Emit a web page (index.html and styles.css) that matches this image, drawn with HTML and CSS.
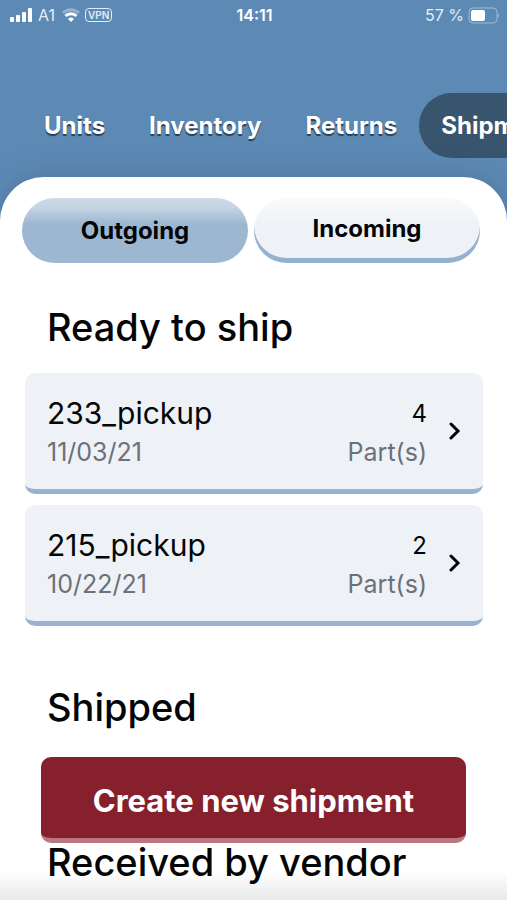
FILE: index.html
```html
<!DOCTYPE html>
<html lang="en">
<head>
<meta charset="utf-8">
<meta name="viewport" content="width=device-width, initial-scale=1">
<title>Shipments</title>
<link rel="stylesheet" href="styles.css">
</head>
<body>
<div class="app">
  <header class="header">
    <div class="status">
      <div class="status-left">
        <svg class="signal" width="23" height="15" viewBox="0 0 23 15" aria-hidden="true"><rect x="0" y="9" width="4" height="5" rx="1"/><rect x="6" y="7" width="4" height="7" rx="1"/><rect x="12" y="4" width="4" height="10" rx="1"/><rect x="18" y="0" width="4" height="14" rx="1"/></svg>
        <span>A1</span>
        <svg class="wifi" width="18" height="15" viewBox="0 0 18 15" aria-hidden="true"><path class="faint" d="M1 5a11.500 11.500 0 0 1 16 0"/><path d="M3.500 8a8 8 0 0 1 11 0"/><path class="dot" d="M9 14L6 11a4.300 4.300 0 0 1 6 0z"/></svg>
        <span class="vpn">VPN</span>
      </div>
      <span class="clock">14:11</span>
      <div class="status-right">
        <span>57 %</span>
        <svg width="31" height="17" viewBox="0 0 31 17" aria-hidden="true"><rect class="cell" x="1" y="1" width="28" height="15" rx="4"/><rect class="charge" x="3" y="3" width="14" height="11" rx="2"/><path class="cap" d="M30 6q2 2.500 0 5z"/></svg>
      </div>
    </div>
    <nav class="nav">
      <a href="#units">Units</a>
      <a href="#inventory">Inventory</a>
      <a href="#returns">Returns</a>
      <a class="current" href="#shipments" aria-current="page">Shipments</a>
    </nav>
  </header>
  <main class="panel">
    <div class="tabs">
      <button class="tab selected" type="button">Outgoing</button>
      <button class="tab" type="button">Incoming</button>
    </div>
    <section>
      <h2>Ready to ship</h2>
      <a class="card" href="#233">
        <span class="info"><span class="name">233_pickup</span><span class="sub">11/03/21</span></span>
        <span class="count"><span class="number">4</span><span class="sub">Part(s)</span></span>
        <svg class="chevron" width="12" height="18" viewBox="0 0 12 18" aria-hidden="true"><path d="M2 2l7 7-7 7"/></svg>
      </a>
      <a class="card" href="#215">
        <span class="info"><span class="name">215_pickup</span><span class="sub">10/22/21</span></span>
        <span class="count"><span class="number">2</span><span class="sub">Part(s)</span></span>
        <svg class="chevron" width="12" height="18" viewBox="0 0 12 18" aria-hidden="true"><path d="M2 2l7 7-7 7"/></svg>
      </a>
    </section>
    <section><h2>Shipped</h2></section>
    <section><h2>Received by vendor</h2></section>
  </main>
  <button class="create" type="button">Create new shipment</button>
</div>
</body>
</html>
```

FILE: styles.css
```css
* { box-sizing: border-box; }

body {
  margin: 0;
  font-family: Inter, "Liberation Sans", sans-serif;
  color: #040507;
}

a { color: inherit; text-decoration: none; }
button { font-family: inherit; color: inherit; border: 0; }
svg { display: block; flex: none; }

.app {
  position: relative;
  display: flex;
  flex-direction: column;
  height: 100vh;
  overflow: hidden;
  background: #5d8ab5;
}

.header { flex: none; color: #fff; }

.status {
  display: grid;
  grid-template-columns: 1fr auto 1fr;
  align-items: center;
  height: 30px;
  padding: 0 8px 0 10px;
  font-size: 16px;
  color: #e2edf7;
}
.status-left, .status-right { display: flex; align-items: center; gap: 5px; }
.status-right { justify-content: flex-end; gap: 4px; }
.signal { fill: #fff; }
.wifi { margin: 0 0 0 2px; fill: none; stroke: #fff; stroke-width: 3; }
.wifi .faint { stroke: #91b2d0; }
.wifi .dot { fill: #fff; stroke: none; }
.vpn {
  padding: 0 2px;
  border: 1px solid #e2edf7;
  border-radius: 4px;
  font-size: 10px;
  font-weight: 600;
  line-height: 12px;
}
.clock { font-weight: 600; color: #fff; }
.cell { fill: none; stroke: #9dbad5; stroke-width: 1; }
.charge { fill: #fff; }
.cap { fill: #9dbad5; }

.nav {
  display: flex;
  margin-top: 63px;
  padding-left: 22px;
  overflow: hidden;
}
.nav a {
  flex: none;
  padding: 1px 22px 0;
  border-radius: 33px;
  font-size: 24px;
  font-weight: 700;
  line-height: 64px;
  text-shadow: 0 2px 1px #263d52;
}
.nav .current { background: #39546d; text-shadow: none; }

.panel {
  flex: 1;
  min-height: 0;
  margin-top: 19px;
  padding: 21px 24px 0;
  border-radius: 44px 44px 0 0;
  background: linear-gradient(to top, #e9e9e9, #fff 28px);
  box-shadow: 0 0 36px -8px rgba(30, 50, 70, 0.4);
}

.tabs { display: flex; gap: 6px; margin: 0 3px 0 -2px; }
.tab {
  flex: 1;
  height: 65px;
  padding: 0 0 5px;
  border-radius: 33px;
  background: linear-gradient(#f9fafb, #eef2f7 40%);
  box-shadow: inset 0 -5px #94b1d0;
  font-size: 24px;
  font-weight: 700;
}
.tab.selected {
  padding: 0;
  background: linear-gradient(#ccdae7, #c4d4e3 15%, #9db7d1 40%);
  box-shadow: none;
}

h2 {
  margin: 0;
  padding: 41px 23px 23px;
  font-size: 38px;
  font-weight: 500;
  line-height: 46px;
}

.card {
  display: flex;
  align-items: center;
  height: 121px;
  margin: 0 0 11px 1px;
  padding: 0 22px;
  border-bottom: 5px solid #98b3d0;
  border-radius: 10px;
  background: #eef2f7;
}
.card:last-child { margin-bottom: 17px; }
.info, .count { display: flex; flex-direction: column; padding-top: 2px; }
.info { flex: 1; }
.count { align-items: flex-end; margin-right: 22px; }
.name { font-size: 30px; line-height: 40px; }
.number { padding-top: 2px; font-size: 24px; line-height: 38px; }
.sub { font-size: 25px; line-height: 38px; color: #6c7077; }
.chevron { fill: none; stroke: #040507; stroke-width: 3; stroke-linecap: round; }

section + section h2 { padding-bottom: 68px; }

.create {
  position: absolute;
  right: 41px;
  bottom: 57px;
  left: 41px;
  height: 86px;
  padding: 5px 0 0;
  border-bottom: 5px solid #b97880;
  border-radius: 10px;
  background: #86202c;
  font-size: 31px;
  font-weight: 700;
  color: #fff;
}
```
